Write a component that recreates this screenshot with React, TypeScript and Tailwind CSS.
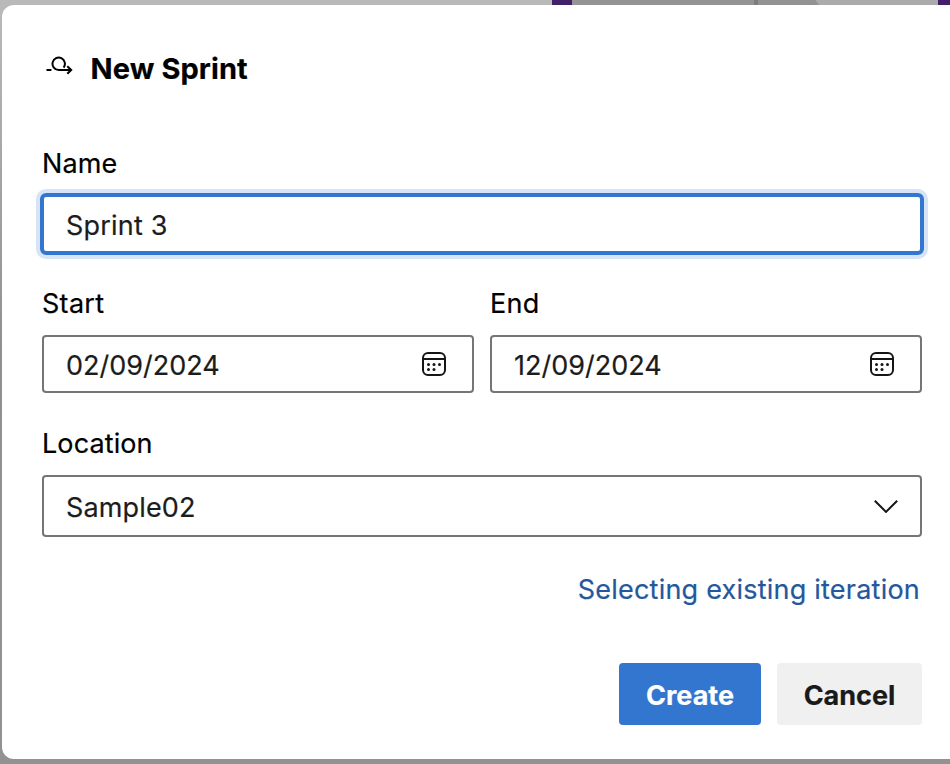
import React from "react";

function SprintIcon() {
  return (
    <svg width="28" height="20" viewBox="0 0 28 20" fill="none" stroke="#000" strokeWidth="2">
      <path d="M0.5 14H5.4" />
      <path d="M25.2 14H12.6A6.2 6.2 0 1 1 17.6 11.6" />
      <path d="M21.3 10.2L25.2 14L21.3 17.8" />
    </svg>
  );
}

function CalendarIcon() {
  return (
    <svg width="24" height="24" viewBox="0 0 24 24" fill="none" className="shrink-0">
      <rect x="1" y="1" width="22" height="22" rx="5" stroke="#161616" strokeWidth="2" />
      <path d="M1 7H23" stroke="#161616" strokeWidth="2" />
      <g fill="#161616">
        <circle cx="6.5" cy="12.4" r="1.5" />
        <circle cx="12" cy="12.4" r="1.5" />
        <circle cx="17.5" cy="12.4" r="1.5" />
        <circle cx="6.5" cy="17.5" r="1.5" />
        <circle cx="12" cy="17.5" r="1.5" />
      </g>
    </svg>
  );
}

function DateField({ label, value }: { label: string; value: string }) {
  return (
    <div className="w-[432px]">
      <div className="h-10 leading-[42px] tracking-[0.3px]">{label}</div>
      <div className="mt-[12px] flex h-[58px] items-center justify-between rounded-[4px] border-2 border-[#757575] pl-[22px] pr-[26px] text-[#1c1c1c]">
        <span className="pt-[4px] tracking-[0px]">{value}</span>
        <CalendarIcon />
      </div>
    </div>
  );
}

export default function App() {
  return (
    <div className="h-[764px] w-[950px] overflow-hidden bg-[linear-gradient(to_bottom,#bababa,#909090_45%,#929292)] font-['Inter',sans-serif] text-[27px] text-black [-webkit-text-stroke:0.2px]">
      <div className="flex h-[5px]">
        <div className="w-[552px] bg-[#b9b9b9]" />
        <div className="w-[20px] bg-[#402068]" />
        <div className="w-[182px] bg-[#949494]" />
        <div className="w-[4px] bg-[#7c7c7c]" />
        <div className="w-[180px] bg-[linear-gradient(54deg,#929292_49px,#ababab_50px)]" />
        <div className="w-[12px] bg-[#402068]" />
      </div>
      <div className="ml-[2px] h-[754px] w-[980px] rounded-[12px] bg-white pl-[40px] pt-[42px]">
        <div className="flex h-[44px] w-[880px] items-center">
          <div className="ml-[3.5px] -mt-[6px] w-[45px]">
            <SprintIcon />
          </div>
          <h1 className="text-[29px] font-bold tracking-[0.1px]">New Sprint</h1>
        </div>

        <div className="mt-[52px] h-10 leading-[42px] tracking-[0.1px]">Name</div>
        <div className="-ml-[2px] mt-[10px] flex h-[62px] w-[884px] items-center rounded-[6px] border-4 border-[#3276cf] pl-[22px] pt-[4px] tracking-[0.2px] text-[#1c1c1c] shadow-[0_0_0_4px_#d7e4f5]">
          Sprint 3
        </div>

        <div className="mt-[28px] flex gap-4">
          <DateField label="Start" value="02/09/2024" />
          <DateField label="End" value="12/09/2024" />
        </div>

        <div className="mt-[30px] h-10 leading-[42px] tracking-[0.1px]">Location</div>
        <div className="mt-[12px] flex h-[62px] w-[880px] items-center justify-between rounded-[4px] border-2 border-[#757575] pl-[22px] pr-[22px] text-[#1c1c1c]">
          <span className="pt-[4px] tracking-[0.15px]">Sample02</span>
          <svg width="24" height="14" viewBox="0 0 24 14" fill="none" stroke="#161616" strokeWidth="2">
            <path d="M0.8 1.7L12 12.9L23.2 1.7" />
          </svg>
        </div>

        <div className="mt-[32px] flex h-10 w-[878px] items-center justify-end pt-[2px] tracking-[0.22px] text-[#24589d]">
          Selecting existing iteration
        </div>

        <div className="mt-[54px] flex w-[880px] justify-end gap-4 font-bold">
          <button className="h-[62px] w-[142px] rounded-[4px] bg-[#3276cf] pt-[4px] text-white">Create</button>
          <button className="h-[62px] w-[145px] rounded-[4px] bg-[#f0f0f0] pt-[4px] text-[#1a1a1a]">Cancel</button>
        </div>
      </div>
    </div>
  );
}
